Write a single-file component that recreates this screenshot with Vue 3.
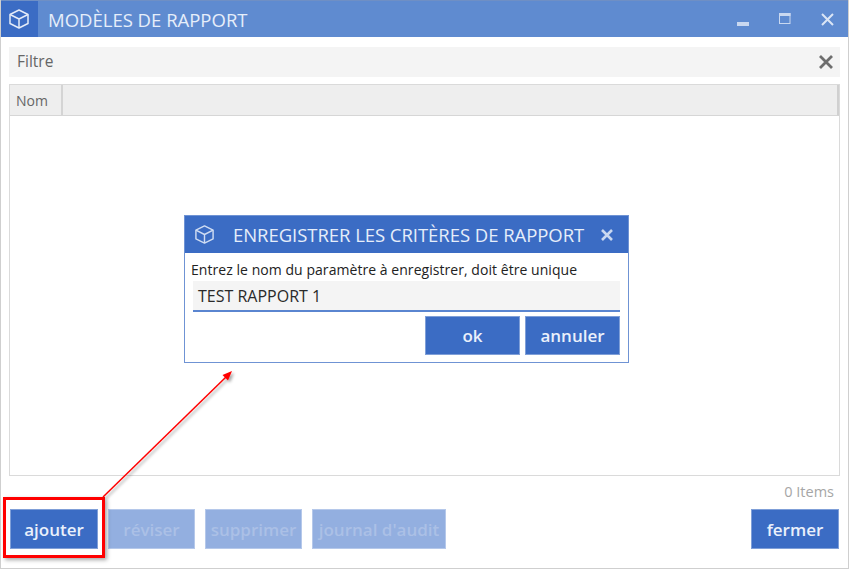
<script setup>
const actions = [
  { label: 'ajouter', cls: 'w88', off: false },
  { label: 'réviser', cls: 'w87', off: true },
  { label: 'supprimer', cls: 'w97', off: true },
  { label: "journal d'audit", cls: 'w134', off: true }
]
</script>

<template>
  <div class="window">
    <header class="titlebar">
      <div class="appicon">
        <svg width="22" height="22" viewBox="0 0 22 22" fill="none" stroke="#e3ebf8" stroke-width="1.5" stroke-linejoin="round">
          <path d="M11 2 20 6.500V15.500L11 20 2 15.500V6.500Z" />
          <path d="M2 6.500 11 11 20 6.500M11 11V20" />
        </svg>
      </div>
      <h1 class="title">MODÈLES DE RAPPORT</h1>
      <div class="winctrls">
        <svg class="min" width="12" height="12" viewBox="0 0 12 12"><rect y="4" width="12" height="4" fill="#c9d8f0" /></svg>
        <svg class="max" width="12" height="12" viewBox="0 0 12 12" fill="none" stroke="#c9d8f0"><rect x=".5" y=".5" width="10.500" height="10" /><rect x="0" y="0" width="11.500" height="3" fill="#c9d8f0" stroke="none" /></svg>
        <svg class="cls" width="13" height="13" viewBox="0 0 13 13" stroke="#dbe5f5" stroke-width="2"><path d="M1 1 12 12M12 1 1 12" /></svg>
      </div>
    </header>

    <main class="body">
      <div class="filter">
        <span class="filter-label">Filtre</span>
        <svg width="16" height="16" viewBox="0 0 16 16" stroke="#6e6e6e" stroke-width="2.800"><path d="M2 2 14 14M14 2 2 14" /></svg>
      </div>

      <div class="table">
        <div class="thead">
          <div class="th-nom">Nom</div>
          <div class="th-rest"></div>
        </div>
      </div>

      <div class="count">0 Items</div>

      <footer class="actions">
        <button v-for="a in actions" :key="a.label" :class="['btn', a.cls, { off: a.off }]">{{ a.label }}</button>
        <button class="btn w88 close">fermer</button>
      </footer>
    </main>

    <section class="dialog">
      <header class="dlg-bar">
        <div class="dlg-icon">
          <svg width="21" height="21" viewBox="0 0 22 22" fill="none" stroke="#cfdcf2" stroke-width="1.5" stroke-linejoin="round">
            <path d="M11 2 20 6.500V15.500L11 20 2 15.500V6.500Z" />
            <path d="M2 6.500 11 11 20 6.500M11 11V20" />
          </svg>
        </div>
        <h2 class="dlg-title">ENREGISTRER LES CRITÈRES DE RAPPORT</h2>
        <svg class="dlg-x" width="14" height="14" viewBox="0 0 14 14" stroke="#c9d8f0" stroke-width="2.600"><path d="M2 2 12 12M12 2 2 12" /></svg>
      </header>
      <div class="dlg-body">
        <p class="prompt">Entrez le nom du paramètre à enregistrer, doit être unique</p>
        <div class="field">TEST RAPPORT 1</div>
        <div class="dlg-actions">
          <button class="btn dlg-btn">ok</button>
          <button class="btn dlg-btn">annuler</button>
        </div>
      </div>
    </section>

    <div class="callout"></div>
    <svg class="arrow" width="849" height="569" viewBox="0 0 849 569">
      <defs>
        <filter id="sh" x="-20%" y="-20%" width="140%" height="140%">
          <feDropShadow dx="2" dy="2" stdDeviation="1.500" flood-color="#000" flood-opacity=".35" />
        </filter>
      </defs>
      <g filter="url(#sh)">
        <path d="M103 497 226 377" stroke="#f00" stroke-width="1.500" fill="none" />
        <path d="M232 371 222.500 375 228 380.500Z" fill="#f00" />
      </g>
    </svg>
  </div>
</template>

<style>
html, body { margin: 0; background: #fff; }
</style>

<style scoped>
.window {
  position: relative;
  box-sizing: border-box;
  width: 849px;
  height: 569px;
  overflow: hidden;
  background: #fff;
  border-right: 1px solid #cfcfcf;
  border-bottom: 1px solid #cfcfcf;
  border-left: 1px solid #cfcfcf;
  font-family: "Open Sans", "Noto Sans", sans-serif;
}
.titlebar {
  display: flex;
  align-items: center;
  height: 37px;
  margin-left: -1px;
  margin-right: -1px;
  background: #5f8bd0;
  border-top: 1px solid #6f8fc4;
  box-sizing: border-box;
}
.appicon {
  display: flex;
  align-items: center;
  justify-content: center;
  width: 38px;
  height: 100%;
  background: #3b6cc4;
}
.title {
  margin: 0 0 0 10px;
  flex: 1;
  font-size: 18.5px;
  font-weight: 400;
  color: #e6eefa;
}
.winctrls { display: flex; align-items: center; }
.min { margin-right: 30px; margin-top: 9px; }
.max { margin-right: 30px; margin-top: -1px; }
.cls { margin-right: 15px; }

.body {
  display: flex;
  flex-direction: column;
  padding: 10px 8px 0;
}
.filter {
  display: flex;
  align-items: center;
  justify-content: space-between;
  box-sizing: border-box;
  height: 30px;
  padding: 0 6px 0 8px;
  background: #f4f4f4;
  font-size: 15.5px;
  color: #666;
}
.filter-label { margin-top: -2px; }
.table {
  box-sizing: border-box;
  height: 392px;
  margin-top: 7px;
  border: 1px solid #dadada;
}
.thead {
  display: flex;
  height: 31px;
  box-sizing: border-box;
  background: #eee;
  border-bottom: 1px solid #d6d6d6;
  border-right: 2px solid #d0d0d0;
}
.th-nom {
  box-sizing: border-box;
  width: 53px;
  padding-left: 6px;
  line-height: 31px;
  font-size: 14px;
  color: #666;
  border-right: 2px solid #d4d4d4;
}
.th-rest { flex: 1; }
.count {
  height: 33px;
  padding-right: 6px;
  line-height: 32px;
  text-align: right;
  font-size: 14.500px;
  color: #a6a6a6;
}
.actions {
  display: flex;
  gap: 10px;
  padding: 0 1px;
}
.btn {
  box-sizing: border-box;
  height: 40px;
  padding: 0;
  border: 1px solid #7f9fd8;
  background: #3b6cc4;
  color: #eaf0fb;
  font-family: inherit;
  font-size: 17px;
  font-weight: 600;
  white-space: nowrap;
}
.off {
  background: #93afe0;
  border-color: #b5c8ea;
  color: #abc0e6;
}
.w88 { width: 88px; }
.w87 { width: 87px; }
.w97 { width: 97px; }
.w134 { width: 134px; }
.close { margin-left: auto; }

.dialog {
  position: absolute;
  left: 183px;
  top: 215px;
  box-sizing: border-box;
  width: 445px;
  height: 148px;
  border: 1px solid #6f93d4;
  background: #fff;
}
.dlg-bar {
  display: flex;
  align-items: center;
  height: 37px;
  background: #3b6cc4;
}
.dlg-icon { display: flex; width: 38px; justify-content: center; }
.dlg-title {
  margin: 0 0 0 10px;
  flex: 1;
  font-size: 18.5px;
  font-weight: 400;
  letter-spacing: -0.05px;
  white-space: nowrap;
  color: #e6eefa;
}
.dlg-x { margin-right: 14px; }
.dlg-body { padding: 0 8px 0 6px; }
.prompt {
  margin: 0;
  height: 28px;
  line-height: 34px;
  font-size: 14px;
  letter-spacing: 0.05px;
  white-space: nowrap;
  color: #222;
}
.field {
  box-sizing: border-box;
  height: 31px;
  margin-left: 2px;
  padding-left: 5px;
  line-height: 31px;
  font-size: 16px;
  color: #2a2a2a;
  background: #f4f4f4;
  border-bottom: 2px solid #5a85d0;
}
.dlg-actions {
  display: flex;
  justify-content: flex-end;
  gap: 5px;
  margin-top: 4px;
}
.dlg-btn { width: 95px; height: 39px; }

.callout {
  position: absolute;
  left: 2px;
  top: 497px;
  box-sizing: border-box;
  width: 102px;
  height: 61px;
  border: 3px solid #f00;
  box-shadow: 2px 2px 4px rgba(0, 0, 0, 0.35);
}
.arrow {
  position: absolute;
  left: -1px;
  top: 0;
  pointer-events: none;
}
</style>
